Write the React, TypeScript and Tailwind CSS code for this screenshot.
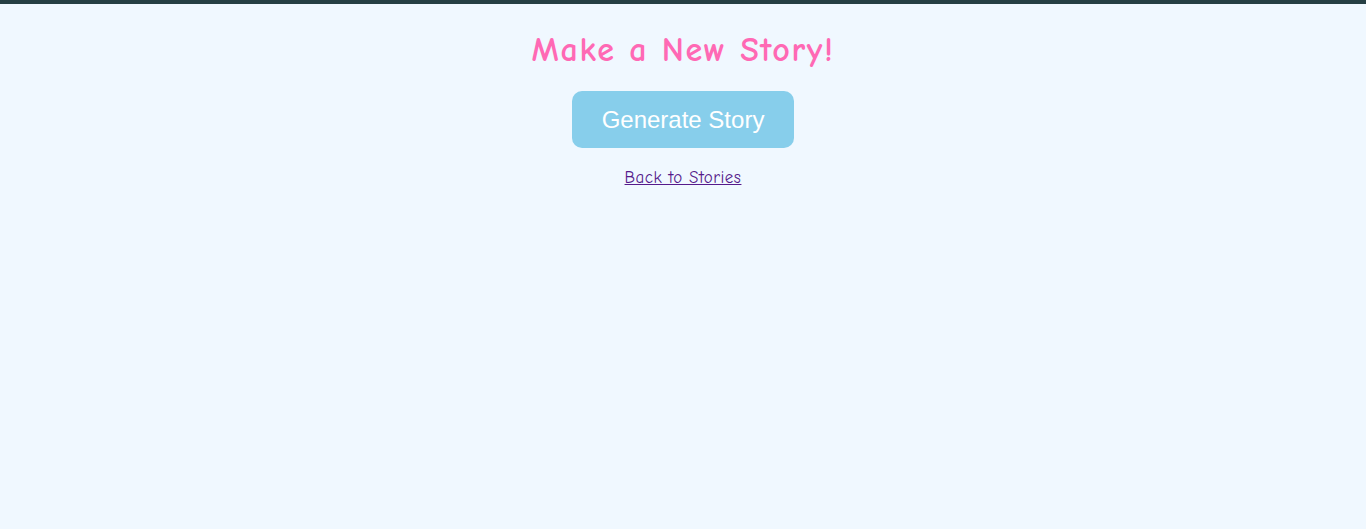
export default function App() {
  return (
    <div className="min-h-[529px] bg-[#f0f8ff] font-['Comic_Sans_MS','Comic_Neue',cursive]">
      <div className="h-1 bg-[#263f44]" />
      <div className="flex flex-col items-center">
        <h1 className="mt-[24px] mb-[18px] text-[34px] font-bold leading-[45px] tracking-[1.6px] text-[#ff69b4]">
          Make a New Story!
        </h1>
        <button className="rounded-[10px] bg-[#87ceeb] px-[30px] py-[15px] font-['Liberation_Sans',Arial,sans-serif] text-2xl leading-[27px] text-white">
          Generate Story
        </button>
        <a href="#" className="mt-[19px] text-[17px] leading-[22px] tracking-[0.5px] text-[#551a8b] underline">
          Back to Stories
        </a>
      </div>
    </div>
  );
}
